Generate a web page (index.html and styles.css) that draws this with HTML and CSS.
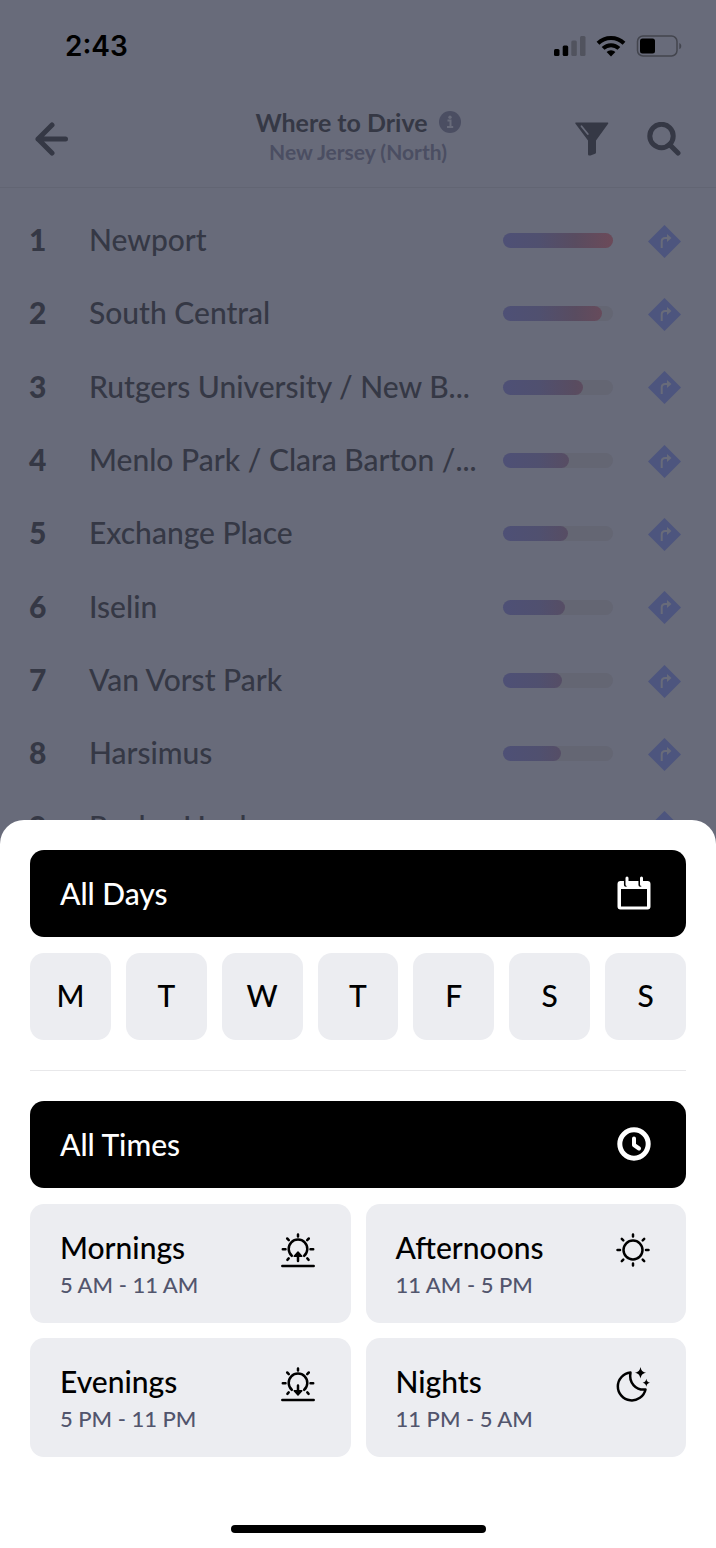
FILE: index.html
```html
<!DOCTYPE html>
<html lang="en">
<head>
    <meta charset="UTF-8">
    <meta name="viewport" content="width=device-width, initial-scale=1.0">
    <title>Where to Drive</title>
    <link rel="stylesheet" href="styles.css">
</head>
<body>
    <div class="page">
        <div class="status-bar">
            <span class="clock">2:43</span>
            <div class="status-icons">
                <svg width="32" height="22" viewBox="0 0 32 22">
                    <rect x="0" y="14" width="5.500" height="7" rx="1.500"/>
                    <rect x="8.700" y="10.500" width="5.500" height="10.500" rx="1.500"/>
                    <rect class="faded" x="17.300" y="5.500" width="5.500" height="15.500" rx="1.500"/>
                    <rect class="faded" x="26" y="1" width="5.500" height="20" rx="1.500"/>
                </svg>
                <svg width="30" height="22" viewBox="0 0 30 22">
                    <g fill="none" stroke="#000" stroke-width="4">
                        <path d="M2 8.2a18.6 18.6 0 0 1 26 0"/>
                        <path d="M7.1 13.4a11.3 11.3 0 0 1 15.8 0"/>
                    </g>
                    <path d="M15 21.4l-4.4-4.4a6.3 6.3 0 0 1 8.8 0z"/>
                </svg>
                <svg width="46" height="22" viewBox="0 0 46 22">
                    <rect x="1.5" y="1" width="39.5" height="20" rx="5.5" fill="none" stroke="#43454e" stroke-width="1.5"/>
                    <rect x="4" y="3.500" width="15" height="15" rx="2.5"/>
                    <path d="M43.3 7.900c2.6.9 2.6 5.300 0 6.200z" fill="#43454e"/>
                </svg>
            </div>
        </div>

        <header class="header">
            <button class="icon-button" aria-label="Back">
                <svg width="34" height="34" viewBox="0 0 34 34" fill="none" stroke="#353845" stroke-width="5" stroke-linecap="round" stroke-linejoin="round">
                    <path d="M30.500 17H3M17 3L3 17l14 14"/>
                </svg>
            </button>
            <div class="heading">
                <h1>Where to Drive
                    <svg width="22" height="22" viewBox="0 0 22 22">
                        <circle cx="11" cy="11" r="11" fill="#4b4e62"/>
                        <circle cx="11" cy="6.200" r="1.700" fill="#686b7a"/>
                        <path d="M8.500 9.500h3v6.200M8 16h6.200" fill="none" stroke="#686b7a" stroke-width="2"/>
                    </svg>
                </h1>
                <p>New Jersey (North)</p>
            </div>
            <div class="actions">
                <button class="icon-button" aria-label="Filter">
                    <svg width="34" height="34" viewBox="0 0 34 34">
                        <path d="M1 .5h31.500c.8 0 1 .7.600 1.300L21 18.500v12c0 .6-.3 1-.9 1.200l-4.600 1.700c-1.400.5-2.500-.2-2.500-1.500V18.500L.5 1.800C0 1.200.3.500 1 .5z" fill="#353845"/>
                        <path d="M6.500 4.200l6.300 7.800" stroke="#686b7a" stroke-width="1.800" stroke-linecap="round"/>
                    </svg>
                </button>
                <button class="icon-button" aria-label="Search">
                    <svg width="34" height="34" viewBox="0 0 34 34" fill="none" stroke="#353845" stroke-width="5">
                        <circle cx="14.500" cy="14" r="11.700"/>
                        <path d="M22.500 22.500l8.500 8.500" stroke-linecap="round"/>
                    </svg>
                </button>
            </div>
        </header>

        <ol class="areas" id="areas"></ol>
    </div>

    <section class="sheet">
        <button class="all-button" aria-pressed="true">All Days
            <svg width="34" height="34" viewBox="0 0 34 34">
                <path d="M3.500 5h27a3 3 0 0 1 3 3v22.500a3 3 0 0 1-3 3h-27a3 3 0 0 1-3-3V8a3 3 0 0 1 3-3zM4 13v17.500h26V13z" fill="#fff" fill-rule="evenodd"/>
                <path d="M8.700 4v5M23.200 4v5" stroke="#000" stroke-width="3.500" stroke-linecap="round"/>
                <path d="M10 2v6.500M24.500 2v6.500" stroke="#fff" stroke-width="3" stroke-linecap="round"/>
            </svg>
        </button>
        <div class="days">
            <button aria-label="Monday">M</button>
            <button aria-label="Tuesday">T</button>
            <button aria-label="Wednesday">W</button>
            <button aria-label="Thursday">T</button>
            <button aria-label="Friday">F</button>
            <button aria-label="Saturday">S</button>
            <button aria-label="Sunday">S</button>
        </div>
        <hr>
        <button class="all-button" aria-pressed="true">All Times
            <svg width="34" height="34" viewBox="0 0 34 34" fill="none" stroke="#fff">
                <circle cx="17" cy="17" r="14.200" stroke-width="5"/>
                <path d="M17 11.500v6.500l5 3.500" stroke-width="4" stroke-linecap="round" stroke-linejoin="round"/>
            </svg>
        </button>
        <div class="times">
            <button>
                <span class="time-text"><span class="time-name">Mornings</span><span class="time-range">5 AM - 11 AM</span></span>
                <svg width="34" height="36" viewBox="0 0 34 36" fill="none" stroke="#000" stroke-width="2.500" stroke-linecap="round">
                    <path d="M10.800 22.800a9.300 9.300 0 1 1 12.400 0"/>
                    <path d="M17 1.500v2M1.800 16.300h2.700M29.500 16.300h2.700M6.200 5.500l1.600 1.600M27.800 5.500l-1.600 1.600M6.400 26.800l1.300-1.400M27.600 26.800l-1.300-1.400M17 28v-5"/>
                    <path d="M17 19l-3.800 4.200h7.600z" fill="#000" stroke-width="1.500" stroke-linejoin="round"/>
                    <path d="M1.300 33h31.400"/>
                </svg>
            </button>
            <button>
                <span class="time-text"><span class="time-name">Afternoons</span><span class="time-range">11 AM - 5 PM</span></span>
                <svg width="34" height="36" viewBox="0 0 34 36" fill="none" stroke="#000" stroke-width="2.500" stroke-linecap="round">
                    <circle cx="17" cy="17" r="9.500"/>
                    <path d="M17 1.500v2M17 30.500v2M1.500 17h2.500M30 17h2.500M5.800 5.800l1.500 1.500M28.200 5.800l-1.500 1.500M5.800 28.200l1.500-1.500M28.200 28.200l-1.500-1.500"/>
                </svg>
            </button>
            <button>
                <span class="time-text"><span class="time-name">Evenings</span><span class="time-range">5 PM - 11 PM</span></span>
                <svg width="34" height="36" viewBox="0 0 34 36" fill="none" stroke="#000" stroke-width="2.500" stroke-linecap="round">
                    <path d="M10.800 22.800a9.300 9.300 0 1 1 12.400 0"/>
                    <path d="M17 1.500v2M1.800 16.300h2.700M29.500 16.300h2.700M6.200 5.500l1.600 1.600M27.800 5.500l-1.600 1.600M6.400 26.800l1.300-1.400M27.600 26.800l-1.300-1.400M17 18.500v5"/>
                    <path d="M17 28l-3.800-4.200h7.600z" fill="#000" stroke-width="1.500" stroke-linejoin="round"/>
                    <path d="M1.300 33h31.400"/>
                </svg>
            </button>
            <button>
                <span class="time-text"><span class="time-name">Nights</span><span class="time-range">11 PM - 5 AM</span></span>
                <svg width="34" height="36" viewBox="0 0 34 36">
                    <path d="M14.500 5.500A14 14 0 1 0 29.500 22.500C20 23.500 12.500 16 14.500 5.500z" fill="none" stroke="#000" stroke-width="2.500" stroke-linejoin="round"/>
                    <path d="M24.500 0c.9 3.900 1.900 4.900 5.700 5.800-3.800.9-4.800 1.900-5.700 5.800-.9-3.900-1.900-4.900-5.700-5.800 3.800-.9 4.800-1.900 5.700-5.800zM30.300 11.800c.6 2.700 1.300 3.500 3.700 4-2.400.5-3.100 1.300-3.700 4-.6-2.700-1.300-3.500-3.700-4 2.400-.5 3.100-1.300 3.700-4z"/>
                </svg>
            </button>
        </div>
        <div class="home-indicator"></div>
    </section>

    <script src="script.js"></script>
</body>
</html>
```
FILE: styles.css
```css
* {
    box-sizing: border-box;
}
body {
    margin: 0;
    font-family: Lato, "Liberation Sans", sans-serif;
    background: #686b7a;
    color: #353845;
}
button {
    border: none;
    font: inherit;
    cursor: pointer;
}
svg {
    display: block;
    flex: none;
}
.page {
    height: 100vh;
    overflow: hidden;
}
.status-bar {
    display: flex;
    justify-content: space-between;
    align-items: center;
    height: 91px;
    padding: 0 34px 0 65px;
    color: #000;
}
.clock {
    font-family: Inter, sans-serif;
    font-size: 28px;
    font-weight: 600;
}
.status-icons {
    display: flex;
    gap: 10px;
}
.faded {
    fill: #51535e;
}
.header {
    display: grid;
    grid-template-columns: 1fr auto 1fr;
    align-items: center;
    height: 97px;
    padding: 0 35px;
    border-bottom: 1px solid #626573;
}
.icon-button {
    padding: 0;
    background: none;
}
.heading {
    padding-bottom: 4px;
    text-align: center;
}
.heading h1 {
    display: flex;
    align-items: center;
    justify-content: center;
    gap: 11px;
    margin: 0;
    font-size: 25px;
    line-height: 30px;
}
.heading p {
    margin: 0;
    font-size: 21px;
    font-weight: bold;
    line-height: 30px;
    color: #4b4e62;
}
.actions {
    display: flex;
    justify-content: flex-end;
    gap: 38px;
}
.areas {
    display: grid;
    grid-auto-rows: 1fr;
    min-height: 676px;
    margin: 0;
    padding: 16px 35px 0 29px;
    list-style: none;
    font-size: 30px;
}
.area {
    display: grid;
    grid-template-columns: 60px 1fr 110px 68px;
    align-items: center;
}
.rank,
.area-name {
    padding-bottom: 3px;
}
.rank {
    font-weight: 900;
}
.area-name {
    font-weight: 500;
    white-space: nowrap;
}
.track {
    height: 15px;
    border-radius: 8px;
    background: #646673;
}
.fill {
    height: 15px;
    border-radius: 8px;
    background: linear-gradient(90deg, #4e5076, #50506f 33%, #594c60 66%, #6c4a59) 0 0 / 110px 15px;
}
.route {
    justify-self: end;
}
.sheet {
    position: fixed;
    left: 0;
    right: 0;
    bottom: 0;
    display: flex;
    flex-direction: column;
    gap: 16px;
    padding: 30px 30px 15px;
    border-radius: 24px 24px 0 0;
    background: #fff;
    color: #000;
    font-size: 30px;
    font-weight: 500;
}
.all-button {
    display: flex;
    align-items: center;
    justify-content: space-between;
    height: 87px;
    padding: 0 35px 2px 30px;
    border-radius: 14px;
    background: #000;
    color: #fff;
}
.days {
    display: grid;
    grid-template-columns: repeat(7, 1fr);
    gap: 15px;
}
.days button {
    height: 87px;
    padding: 0 0 3px;
    border-radius: 14px;
    background: #ecedf1;
    color: #000;
}
.sheet hr {
    width: 100%;
    margin: 14px 0;
    border: none;
    border-top: 1px solid #e8e8ea;
}
.times {
    display: grid;
    grid-template-columns: 1fr 1fr;
    gap: 15px;
}
.times button {
    display: flex;
    align-items: flex-start;
    justify-content: space-between;
    padding: 24px 36px 19px 30px;
    border-radius: 14px;
    background: #ecedf1;
    color: #000;
    text-align: left;
    line-height: 38px;
}
.times svg {
    margin-top: 5px;
}
.time-name,
.time-range {
    display: block;
}
.time-range {
    font-size: 22px;
    color: #52556d;
}
.home-indicator {
    align-self: center;
    width: 255px;
    height: 8px;
    margin-top: 52px;
    border-radius: 4px;
    background: #000;
}
```
FILE: script.js
```js
const areas = [
    ["Newport", 100],
    ["South Central", 90],
    ["Rutgers University / New B...", 73],
    ["Menlo Park / Clara Barton /...", 60],
    ["Exchange Place", 59],
    ["Iselin", 56],
    ["Van Vorst Park", 54],
    ["Harsimus", 53],
    ["Paulus Hook", 50]
];

document.getElementById("areas").innerHTML = areas.map(([name, level], index) => `
    <li class="area">
        <span class="rank">${index + 1}</span>
        <span class="area-name">${name}</span>
        <div class="track"><div class="fill" style="width: ${level}%"></div></div>
        <svg class="route" width="33" height="34" viewBox="0 0 33 34">
            <path d="M16.500 1L33 17.500 16.500 34 0 17.500z" fill="#4d557e"/>
            <path d="M13.700 24v-6.500c0-2.300 1.200-3.500 3.500-3.500H20" fill="none" stroke="#686b7a" stroke-width="2"/>
            <path d="M19 10l4.500 4-4.500 4z" fill="#686b7a"/>
        </svg>
    </li>
`).join("");
```
